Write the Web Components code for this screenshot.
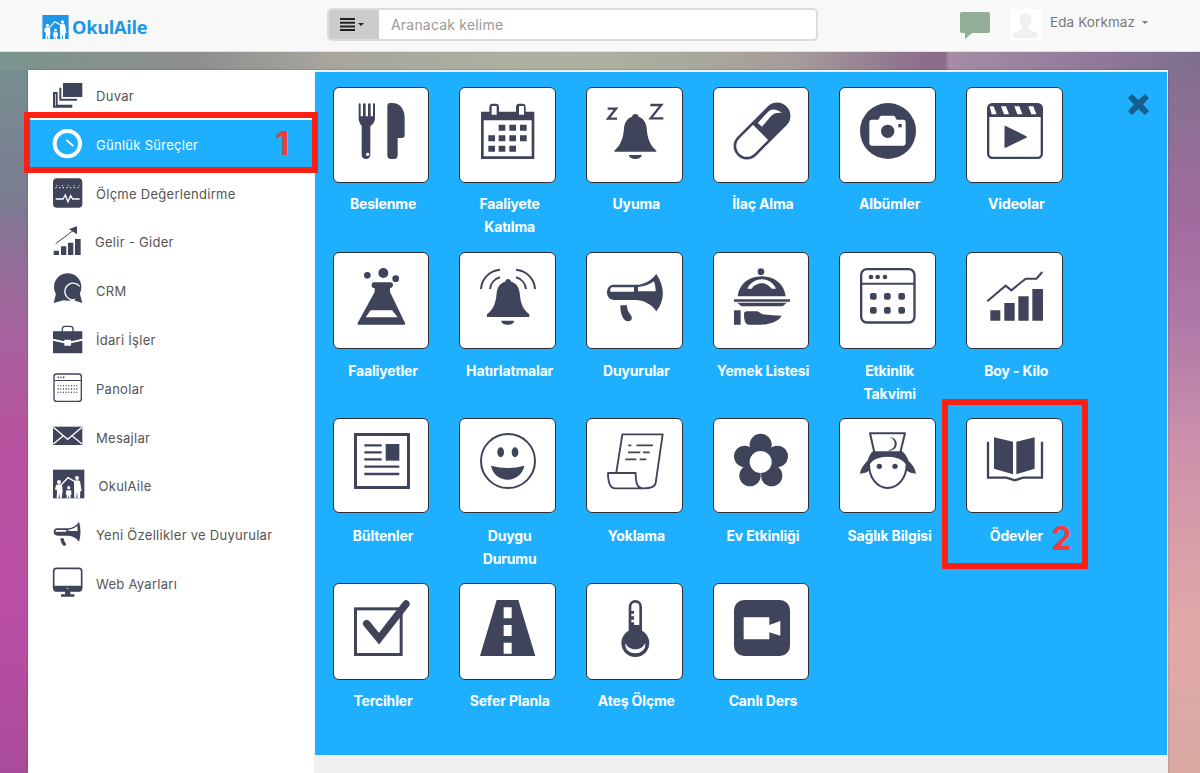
<!DOCTYPE html>
<html lang="tr">
<head>
<meta charset="utf-8">
<title>OkulAile</title>
<style>
  html, body { margin: 0; padding: 0; height: 100%; overflow: hidden; }
  body { font-family: Inter, "Liberation Sans", sans-serif; }
</style>
</head>
<body>
<page-shell>
  <top-bar slot="top" user="Eda Korkmaz" placeholder="Aranacak kelime"></top-bar>
  <side-menu slot="side">
    <side-item icon="wall">Duvar</side-item>
    <side-item icon="clock" active>Günlük Süreçler</side-item>
    <side-item icon="gauge">Ölçme Değerlendirme</side-item>
    <side-item icon="growth" shift="-1">Gelir - Gider</side-item>
    <side-item icon="crm">CRM</side-item>
    <side-item icon="case">İdari İşler</side-item>
    <side-item icon="board">Panolar</side-item>
    <side-item icon="mail">Mesajlar</side-item>
    <side-item icon="family" shift="2.5">OkulAile</side-item>
    <side-item icon="horn">Yeni Özellikler ve Duyurular</side-item>
    <side-item icon="screen">Web Ayarları</side-item>
  </side-menu>
  <tile-panel slot="main">
    <tile-row style="height:165px;--tile-h:96.6px;--label-gap:9px">
      <app-tile icon="cutlery">Beslenme</app-tile>
      <app-tile icon="calendar">Faaliyete Katılma</app-tile>
      <app-tile icon="sleep">Uyuma</app-tile>
      <app-tile icon="pill">İlaç Alma</app-tile>
      <app-tile icon="camera">Albümler</app-tile>
      <app-tile icon="video">Videolar</app-tile>
    </tile-row>
    <tile-row style="height:166.6px;--tile-h:97px;--label-gap:10.2px">
      <app-tile icon="flask">Faaliyetler</app-tile>
      <app-tile icon="alarm">Hatırlatmalar</app-tile>
      <app-tile icon="megaphone">Duyurular</app-tile>
      <app-tile icon="meal">Yemek Listesi</app-tile>
      <app-tile icon="events">Etkinlik Takvimi</app-tile>
      <app-tile icon="chart">Boy - Kilo</app-tile>
    </tile-row>
    <tile-row style="height:165px;--tile-h:95.4px;--label-gap:10.2px">
      <app-tile icon="news">Bültenler</app-tile>
      <app-tile icon="smile">Duygu Durumu</app-tile>
      <app-tile icon="scroll">Yoklama</app-tile>
      <app-tile icon="flower">Ev Etkinliği</app-tile>
      <app-tile icon="nurse">Sağlık Bilgisi</app-tile>
      <app-tile icon="book">Ödevler</app-tile>
    </tile-row>
    <tile-row style="height:150px;--tile-h:97px;--label-gap:8.8px">
      <app-tile icon="check">Tercihler</app-tile>
      <app-tile icon="road">Sefer Planla</app-tile>
      <app-tile icon="thermo">Ateş Ölçme</app-tile>
      <app-tile icon="live">Canlı Ders</app-tile>
    </tile-row>
  </tile-panel>
  <mark-box slot="marks" n="1" style="left:24px;top:112px;width:294px;height:61px;--nx:252px;--ny:14px"></mark-box>
  <mark-box slot="marks" n="2" style="left:942px;top:399px;width:146px;height:170px;--nx:110px;--ny:122px"></mark-box>
</page-shell>

<script>
// ikonlar: viewBox 168x168 (tile), 90x90 (menu) - referanstan 3x olcekle alindi
const INK = "#3f445b";
const TILE_ICONS = {
  cutlery: `<path fill="${INK}" fill-rule="evenodd" d="M14 4q0-3 3-3t3 3v36h7V4q0-3 4-3t4 3v36h7V4q0-3 4-3t4 3v36h7V4q0-3 3-3t3 3v40c0 14-8 21-14 25v86c0 9-6 13-13 13s-13-4-13-13V69C21 65 14 58 14 44zM41 149a5 5 0 1 0 .1 0z"/><path fill="${INK}" d="M100 9q0-9 9-9h6c22 0 37 18 37 44v52q0 9-9 9h-12v52q0 11-11 11h-9q-11 0-11-11z"/>`,
  calendar: `<path fill="${INK}" fill-rule="evenodd" d="M3 26h25V12q0-10 10-10h9q10 0 10 10v14h51V12q0-10 10-10h9q10 0 10 10v14h26v142H3zM11 52v108h144V52zM35 9v26h15V9zM117 9v26h15V9z"/>
    <path fill="${INK}" d="M56 65h20v18H56zM88 65h20v18H88zM120 65h20v18h-20zM25 97h20v18H25zM56 97h20v18H56zM88 97h20v18H88zM120 97h20v18h-20zM25 128h20v18H25zM56 128h20v18H56zM88 128h20v18H88z"/>`,
  sleep: `<path fill="none" stroke="${INK}" stroke-width="7" d="M2 17h25L3 47h27M130 6h33l-32 40h38"/>
    <path fill="${INK}" d="M85 33c6 0 9 4 10 8 14 4 22 18 24 34 2 28 8 50 29 68v3H22v-3c21-18 27-40 29-68 2-16 10-30 24-34 1-4 4-8 10-8zM65 156h40q-4 12-20 12t-20-12z"/>`,
  pill: `<g transform="translate(84 84) rotate(-45)"><rect x="-100" y="-36" width="200" height="72" rx="36" fill="#fff" stroke="${INK}" stroke-width="8"/>
    <path fill="${INK}" d="M-6-36H64a36 36 0 0 1 0 72H-6z"/>
    <path fill="#fff" d="M8-26L9-9 47-12C60-14 72-8 81 4 78-14 70-28 52-28z"/></g>`,
  camera: `<circle cx="84" cy="84" r="84" fill="${INK}"/><path fill="#fff" d="M35 50h20l5-9q1-3 5-3h35q4 0 5 3l5 9h20q7 0 7 7v64q0 7-7 7H35q-7 0-7-7V57q0-7 7-7z"/>
    <circle cx="83" cy="85" r="20" fill="${INK}"/><rect x="115" y="63" width="10" height="10" fill="${INK}"/>`,
  video: `<rect x="3.5" y="3.5" width="161" height="161" rx="12" fill="#fff" stroke="${INK}" stroke-width="7"/>
    <path fill="${INK}" d="M6 6h156v36H6z"/><path fill="#fff" d="M8 10h12l9 24H14zM42 10h15l9 24H51zM82 10h15l9 24H91zM124 10h15l9 24h-15z"/>
    <path fill="${INK}" stroke="${INK}" stroke-width="5" stroke-linejoin="round" d="M55 71v61l62-30z"/>`,
  flask: `<circle cx="40" cy="22" r="10" fill="${INK}"/><circle cx="88" cy="15" r="15" fill="${INK}"/><circle cx="125" cy="32" r="10" fill="${INK}"/>
    <path fill="${INK}" fill-rule="evenodd" d="M60 43h50q7 0 7 8t-7 9h-2v12l45 93v5H11v-5l51-93V60h-2q-7 0-7-9t7-8zM50 127l-15 21h96l-17-21z"/>`,
  alarm: `<path fill="${INK}" d="M83 33c6 0 9 3 10 8 16 4 24 16 26 34 3 32 8 46 29 64v8H21v-8c21-18 26-32 29-64 2-18 10-30 26-34 1-5 4-8 7-8zM63 158h40q-3 12-20 12t-20-12z"/>
    <path fill="none" stroke="${INK}" stroke-width="6" d="M3 63C5 32 28 8 60 5M30 63C32 46 44 32 60 28M165 63C163 32 140 8 108 5M138 63C136 46 124 32 108 28"/>`,
  megaphone: `<path fill="${INK}" d="M20 50h75c20-2 40-15 53-32 26 38 26 80 0 112-13-20-36-32-58-34H22C8 96 0 86 0 73s8-23 20-23zM40 112h20c0 15 6 22 13 32 5 10-3 16-11 16-12 0-22-20-22-48z"/>
    <path fill="#fff" d="M14 58h67v13H10c-1-6 0-11 4-13zM93 57c18-1 34-7 48-17 3 9 5 19 5 30H93z"/>`,
  meal: `<circle cx="81" cy="11" r="10" fill="${INK}"/>
    <path fill="${INK}" d="M83 25c40 0 68 25 72 60H11c4-35 32-60 72-60zM0 94h168v8l-8 1-14 12H22L8 103H0z"/><path fill="#fff" d="M40 62c10-20 28-28 43-28 16 0 34 8 43 28h-13C104 50 92 46 83 46s-22 4-30 16z"/><path fill="#fff" d="M0 101h168v3H0z"/>
    <path fill="${INK}" d="M0 127h20v43H0zM30 138q0-8 9-8h32l14 9q30 4 58 4c-10 17-32 26-62 27H45c-10 0-15-10-15-32z"/>`,
  events: `<rect x="3.5" y="3.5" width="160" height="160" rx="17" fill="#fff" stroke="${INK}" stroke-width="7"/><path fill="${INK}" d="M5 44h158v6H5z"/>
    <circle cx="33" cy="27" r="7" fill="${INK}"/><circle cx="53" cy="27" r="7" fill="${INK}"/><circle cx="75" cy="27" r="7" fill="${INK}"/>
    <path fill="${INK}" d="M36 75h8q6 0 6 6v8q0 6-6 6h-8q-6 0-6-6v-8q0-6 6-6zM78 75h8q6 0 6 6v8q0 6-6 6h-8q-6 0-6-6v-8q0-6 6-6zM121 75h8q6 0 6 6v8q0 6-6 6h-8q-6 0-6-6v-8q0-6 6-6zM36 117h8q6 0 6 6v8q0 6-6 6h-8q-6 0-6-6v-8q0-6 6-6zM78 117h8q6 0 6 6v8q0 6-6 6h-8q-6 0-6-6v-8q0-6 6-6zM121 117h8q6 0 6 6v8q0 6-6 6h-8q-6 0-6-6v-8q0-6 6-6z"/>`,
  chart: `<path fill="${INK}" d="M10 127h30v31H10zM52 105h31v53H52zM94 85h31v73H94zM136 63h32v95h-32z"/><path fill="none" stroke="${INK}" stroke-width="6" d="M1 100l55-47 17 14 43-35h32l18-20"/>`,
  news: `<rect x="4.500" y="4.500" width="159" height="159" fill="#fff" stroke="${INK}" stroke-width="9"/><path fill="${INK}" d="M95 33h41v50H95z"/>
    <path fill="none" stroke="${INK}" stroke-width="7" d="M31 37h52M31 58h52M31 79h52M31 101h105M31 123h105"/>`,
  smile: `<circle cx="84" cy="84" r="81" fill="#fff" stroke="${INK}" stroke-width="6"/><ellipse cx="62" cy="58" rx="10" ry="15" fill="${INK}"/><ellipse cx="105" cy="58" rx="10" ry="15" fill="${INK}"/>
    <path fill="${INK}" d="M33 98q50 14 100 0c-5 27-28 42-50 42S38 125 33 98z"/>`,
  scroll: `<path fill="#fff" stroke="${INK}" stroke-width="5.500" stroke-linejoin="round" d="M28 118L46 4h121l-21 146c-2 13-15 16-36 16H25C8 166 3 150 3 120h83c0 30 4 46 24 46"/>
    <path fill="none" stroke="${INK}" stroke-width="5" d="M64 37h9M88 37h50M63 58h37M108 58h20M55 79h33M98 79h20"/>`,
  flower: `<g fill="${INK}"><circle cx="80" cy="35" r="33"/><circle cx="32" cy="70" r="32"/><circle cx="130" cy="70" r="32"/><circle cx="48" cy="128" r="32"/><circle cx="113" cy="128" r="32"/><circle cx="80" cy="82" r="40"/></g><circle cx="80" cy="87" r="33" fill="#fff"/>`,
  nurse: `<path fill="${INK}" d="M43 52h78c12 6 19 18 25 32 8 8 20 22 22 38-12-1-22-4-30-12L120 86H48L30 110c-8 8-18 11-30 12 2-16 14-30 22-38 6-14 10-26 21-32z"/>
    <path fill="#fff" stroke="${INK}" stroke-width="6" d="M27 92c0 45 26 73 56 73s57-28 57-73c-10-15-26-24-57-24S36 77 27 92z"/>
    <path fill="#fff" stroke="${INK}" stroke-width="6" stroke-linejoin="round" d="M30 1h105l-14 57H43z"/>
    <path fill="${INK}" d="M88 13a20 20 0 1 1-6 38 16 16 0 0 0 6-38z"/>
    <circle cx="58" cy="100" r="8" fill="${INK}"/><circle cx="105" cy="100" r="8" fill="${INK}"/>`,
  book: `<path fill="${INK}" d="M21 13l57 13v98l-57-17zM143 13L88 26v98l55-17z"/><path fill="none" stroke="${INK}" stroke-width="7" d="M3 26v108h55l25 8 25-8h57V26"/>`,
  check: `<rect x="4.500" y="26.500" width="137" height="137" fill="#fff" stroke="${INK}" stroke-width="9"/><path fill="none" stroke="${INK}" stroke-width="22" stroke-linecap="round" stroke-linejoin="miter" d="M38 71l37 45 81-104"/>`,
  road: `<path fill="${INK}" fill-rule="evenodd" d="M50 0h65l51 168H0zM71 22v33h24V22zM71 75v33h24V75zM71 128v33h24v-33z"/>`,
  thermo: `<path fill="${INK}" fill-rule="evenodd" d="M65 20a20 20 0 0 1 40 0v72a42 42 0 1 1-40 0zM73 20v55h8v-8h-8v-8h8v-10h-8v-8h8v-8h-8v-13a12 12 0 0 1 24 0v55h-24z"/><path fill="#fff" d="M55 130c8 14 18 18 30 18s22-4 30-18c2 20-14 30-30 30s-32-10-30-30z"/>`,
  live: `<rect width="168" height="168" rx="30" fill="${INK}"/><path fill="#fff" d="M29 52h77v66H29zM106 75l33-12v44l-33-10z"/>`
};
const familyFigures = `<g fill="#fff"><circle cx="72" cy="25" r="6"/><path d="M63 34q9-4 18 0l5 30-4 1-1 21h-7l-2-20-2 20h-6l-1-36z"/>
  <circle cx="18" cy="37" r="6"/><path d="M9 46q9-4 18 0l2 18-3 22h-5l-2-14-2 14h-6l1-24-6-2z"/>
  <circle cx="47" cy="54" r="5"/><path d="M40 62h14l2 12-3 1v11h-4l-2-9-2 9h-4V75l-3-1z"/></g>
  <path fill="none" stroke="#fff" stroke-width="4" d="M24 46L45 24l21 12"/>`;
const MENU_ICONS = {
  wall: `<g transform="translate(0 6)"><path fill="${INK}" d="M30 0h58v42H30z"/><path fill="none" stroke="${INK}" stroke-width="6" d="M22 14v36h50M3 30h8v38h44v3H3z"/></g>`,
  clock: `<circle cx="43" cy="41" r="38" fill="none" stroke="#fff" stroke-width="12"/><path fill="none" stroke="#fff" stroke-width="5" d="M40 30l21 18"/>`,
  gauge: `<g transform="translate(0 -2)"><rect width="88" height="88" rx="12" fill="${INK}"/><path fill="none" stroke="#fff" stroke-width="4" d="M8 62h22l7-12 8 20 8-18 6 10h21"/><path fill="none" stroke="#fff" stroke-width="3" stroke-dasharray="4 7" d="M7 28h76"/><path fill="none" stroke="#fff" stroke-width="3" stroke-dasharray="3 14" d="M10 22h70"/></g>`,
  growth: `<g transform="translate(0 -4)"><path fill="${INK}" d="M2 75h16v13H2zM24 62h16v26H24zM45 51h16v37H45zM66 40h17v48H66z"/><path fill="none" stroke="${INK}" stroke-width="3" d="M8 54l56-42"/><path fill="${INK}" d="M72 2v24L48 10z"/></g>`,
  crm: `<g transform="translate(0 -5)"><circle cx="44" cy="38" r="41" fill="${INK}"/><path fill="${INK}" d="M2 86l8-32 22 24zM88 86l-8-30-18 22z"/><path fill="none" stroke="#fff" stroke-width="4" d="M80 36A25 25 0 1 0 66 76"/></g>`,
  case: `<path fill="none" stroke="${INK}" stroke-width="4" d="M28 20v-8q0-8 8-8h16q8 0 8 8v8"/><path fill="${INK}" d="M0 19h88v22l-34 8v-5H34v5L0 41zM0 47l34 8v7h20v-7l34-8v38H0z"/><path fill="#fff" d="M38 48h12v9H38z"/>`,
  board: `<g transform="translate(0 -2)"><rect x="3" y="2" width="82" height="82" rx="8" fill="#fff" stroke="${INK}" stroke-width="4"/><path fill="${INK}" d="M4 20h80v3H4z"/><path fill="none" stroke="${INK}" stroke-width="5" stroke-dasharray="4 4" d="M14 12h20"/><path fill="none" stroke="${INK}" stroke-width="4" stroke-dasharray="3 5" d="M14 37h62M14 47h62M14 57h62"/></g>`,
  mail: `<g transform="translate(0 11)"><path fill="${INK}" d="M0 0h88v55H0z"/><path fill="none" stroke="#fff" stroke-width="4" d="M1 2l43 36L87 2M1 52l29-24M87 52L58 28"/></g>`,
  family: `<g transform="translate(0 -4)"><path fill="${INK}" d="M0 0h94v86H0z"/>${familyFigures}</g>`,
  horn: `<g transform="translate(2 3)"><path fill="${INK}" d="M10 22h34c12-1 24-8 32-20 6 20 6 42 0 60-8-12-20-18-32-18H12C4 44 0 39 0 33s4-11 10-11zM20 52h10c1 8 3 11 7 16 1 4-1 6-5 6-7 0-11-12-12-22z"/><path fill="#fff" d="M7 27h31v5H5zM44 26c10-1 20-5 27-11l1 15H44z"/></g>`,
  screen: `<g transform="translate(0 -4)"><rect x="2" y="2" width="84" height="66" rx="8" fill="#fff" stroke="${INK}" stroke-width="5"/><path fill="${INK}" d="M2 54h84v12q0 6-6 6H8q-6 0-6-6zM36 70h16v10h12v7H24v-7h12z"/><circle cx="44" cy="62" r="2" fill="#fff"/></g>`
};

class PageShell extends HTMLElement {
  constructor() {
    super();
    this.attachShadow({ mode: "open" }).innerHTML = `
      <style>
        :host {
          display: flex; flex-direction: column; position: relative;
          height: 773px; overflow: hidden;
          background-repeat: no-repeat;
          background-image:
            linear-gradient(90deg, #7b958f 0, #908f8e 200px, #a8a59f 330px, #adb3a0 570px, #a9a89c 700px, #a59a9b 800px, #8b6c8a 930px, #8b6c8a 945px, #a68ca4 949px, #90789a 1100px, #7d6e8e 1200px),
            linear-gradient(180deg, #76918f 50px, #7b7c92 200px, #8d6f95 250px, #a8609e 340px, #b8529f 450px, #bb4ea5 600px, #a94b9b 773px),
            linear-gradient(180deg, #80708f 50px, #8f6f95 130px, #a06b9e 220px, #ae78a8 320px, #cd92ab 450px, #e0a8a8 620px, #d9a9a2 773px);
          background-size: 100% 70px, 50% 100%, 50% 100%;
          background-position: 0 0, 0 0, 100% 0;
        }
        .card {
          display: grid; grid-template-columns: 286px 1fr;
          margin: 18px 32px 0 28px; flex: 1; min-height: 0;
          background: #fff;
          box-shadow: 0 0 2px rgba(60,60,60,.45);
        }
      </style>
      <slot name="top"></slot>
      <div class="card"><slot name="side"></slot><slot name="main"></slot></div>
      <slot name="marks"></slot>`;
  }
}

class TopBar extends HTMLElement {
  constructor() {
    super();
    this.attachShadow({ mode: "open" }).innerHTML = `
      <style>
        :host {
          display: flex; align-items: flex-start; height: 51px; flex: none;
          background: #f8f8f8; border-bottom: 1px solid #e2e2e2; color: #777;
          font-family: Inter, "Liberation Sans", sans-serif;
        }
        .logo { display: flex; align-items: center; gap: 3px; width: 285px; margin-left: 42px; padding-top: 15px; height: 24px; }
        .logo svg { width: 27px; height: 24px; display: block; }
        .logo b { font: 700 18.200px/24px "Open Sans", sans-serif; color: #1e96e8; letter-spacing: -.3px; }
        .search { display: flex; width: 491px; height: 33px; margin-top: 8px; box-sizing: border-box; border: 2px solid #dcdcdc; border-radius: 5px; background: #fff; overflow: hidden; }
        .menu { display: flex; align-items: center; gap: 3px; width: 50px; padding-left: 11px; box-sizing: border-box; background: #ccc; }
        .menu svg { width: 15px; height: 13px; }
        .caret { width: 0; height: 0; border: 3.5px solid transparent; border-top-color: currentColor; border-bottom: 0; }
        .menu .caret { color: #222; }
        .ph { padding-left: 12px; font-size: 14px; line-height: 29px; color: #999; letter-spacing: .2px; }
        .right { display: flex; align-items: flex-start; margin-left: 142px; }
        .chat { width: 30px; height: 28px; margin-top: 12px; }
        .avatar { width: 31px; height: 31px; margin: 9px 9px 0 20px; background: #fff; }
        .name { font-size: 13.500px; line-height: 18px; margin-top: 13px; letter-spacing: .1px; }
        .right .caret { margin: 21px 0 0 7px; border-width: 3.500px; border-bottom: 0; }
      </style>
      <div class="logo">
        <svg viewBox="0 0 94 86"><path fill="#1e96e8" d="M0 0h94v86H0z"/>${familyFigures}</svg>
        <b>OkulAile</b>
      </div>
      <div class="search">
        <div class="menu">
          <svg viewBox="0 0 15 13"><path fill="#222" d="M0 0h15v2H0zM0 3.700h15v2H0zM0 7.400h15v2H0zM0 11h15v2H0z"/></svg>
          <span class="caret"></span>
        </div>
        <div class="ph">${this.getAttribute("placeholder")}</div>
      </div>
      <div class="right">
        <svg class="chat" viewBox="0 0 30 28"><path fill="#93ae96" d="M2 0h26q2 0 2 2v17q0 2-2 2H12l-7 6v-6H2q-2 0-2-2V2q0-2 2-2z"/></svg>
        <div class="avatar"><svg viewBox="0 0 31 31" width="31" height="31"><path fill="#f0f0f0" d="M15.500 4c4 0 6 3 6 7 0 3-1 5-3 7v2l9 4v5H3.500v-5l9-4v-2c-2-2-3-4-3-7 0-4 2-7 6-7z"/></svg></div>
        <span class="name">${this.getAttribute("user")}</span>
        <span class="caret"></span>
      </div>`;
  }
}

class SideMenu extends HTMLElement {
  constructor() {
    super();
    this.attachShadow({ mode: "open" }).innerHTML = `
      <style>
        :host { display: block; padding: 1.700px 2px 0; background: #fff; font-family: Inter, "Liberation Sans", sans-serif; }
      </style>
      <slot></slot>`;
  }
}

class SideItem extends HTMLElement {
  constructor() {
    super();
    const icon = this.getAttribute("icon");
    const shift = this.getAttribute("shift") || 0;
    this.attachShadow({ mode: "open" }).innerHTML = `
      <style>
        :host {
          display: flex; align-items: center; height: 48.800px; padding-left: 23px;
          font-size: 13px; letter-spacing: .28px; color: #555;
        }
        :host([active]) { background: #1eb0ff; color: #fff; }
        svg { width: 30px; height: 30px; flex: none; overflow: visible; }
        span { margin-left: calc(13px + ${shift}px); }
      </style>
      <svg viewBox="0 0 90 90">${MENU_ICONS[icon]}</svg>
      <span><slot></slot></span>`;
  }
}

class TilePanel extends HTMLElement {
  constructor() {
    super();
    this.attachShadow({ mode: "open" }).innerHTML = `
      <style>
        :host { display: block; position: relative; background: #f0f0f0; }
        .blue {
          height: 683px; box-sizing: border-box; margin: 2px 1.400px 0 1px;
          padding: 14.500px 0 0 2.700px; background: #1eb0ff;
        }
        .close { position: absolute; left: 814px; top: 24px; width: 21px; height: 21px; }
      </style>
      <div class="blue"><slot></slot></div>
      <svg class="close" viewBox="0 0 21 21"><path fill="#155f8e" d="M4 0l6.500 6L17 0l4 4-6 6.500 6 6.500-4 4-6.500-6L4 21l-4-4 6-6.500L0 4z"/></svg>`;
  }
}

class TileRow extends HTMLElement {
  constructor() {
    super();
    this.attachShadow({ mode: "open" }).innerHTML = `
      <style>
        :host { display: grid; grid-template-columns: repeat(6, 126.670px); align-content: start; }
      </style>
      <slot></slot>`;
  }
}

class AppTile extends HTMLElement {
  constructor() {
    super();
    this.attachShadow({ mode: "open" }).innerHTML = `
      <style>
        :host { display: block; font-family: Inter, "Liberation Sans", sans-serif; }
        .box {
          width: 96.600px; height: var(--tile-h, 97px); margin-left: 15px; box-sizing: border-box;
          padding-top: calc(var(--tile-h, 97px) - 81.400px); background: #fff;
          border: 1px solid #2e2e33; border-radius: 6px;
        }
        svg { display: block; width: 56px; height: 56px; margin-left: 20px; overflow: visible; }
        .label {
          width: 100px; margin: var(--label-gap, 9px) 0 0 15.300px; text-align: center;
          font-size: 14px; font-weight: 700; line-height: 23.300px; color: #fff; letter-spacing: -.15px;
        }
      </style>
      <div class="box"><svg viewBox="0 0 168 168">${TILE_ICONS[this.getAttribute("icon")]}</svg></div>
      <div class="label"><slot></slot></div>`;
  }
}

class MarkBox extends HTMLElement {
  constructor() {
    super();
    this.attachShadow({ mode: "open" }).innerHTML = `
      <style>
        :host { display: block; position: absolute; box-sizing: border-box; border: 6.500px solid #ff2015; }
        b {
          position: absolute; left: calc(var(--nx) - 6.500px); top: calc(var(--ny) - 6.500px);
          font: 700 32px/36px Inter, "Liberation Sans", sans-serif; color: #f23c3c;
        }
      </style>
      <b>${this.getAttribute("n")}</b>`;
  }
}

customElements.define("page-shell", PageShell);
customElements.define("top-bar", TopBar);
customElements.define("side-menu", SideMenu);
customElements.define("side-item", SideItem);
customElements.define("tile-panel", TilePanel);
customElements.define("tile-row", TileRow);
customElements.define("app-tile", AppTile);
customElements.define("mark-box", MarkBox);
</script>
</body>
</html>
